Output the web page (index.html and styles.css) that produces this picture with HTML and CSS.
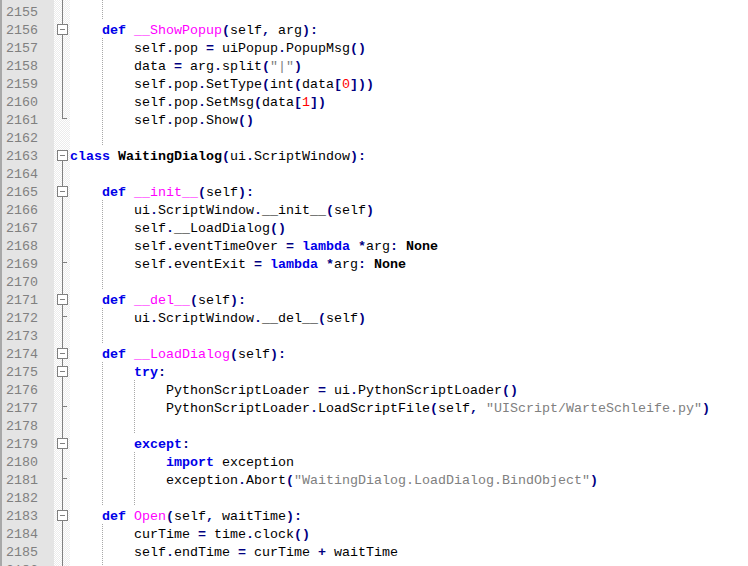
FILE: index.html
```html
<!DOCTYPE html>
<html>
<head>
<meta charset="utf-8">
<link rel="stylesheet" href="styles.css">
</head>
<body>
<div class="editor">
<div class="row"><span class="ln">2154</span><span class="fd v"></span><span class="cd">    <span class="g">    </span></span></div>
<div class="row"><span class="ln">2155</span><span class="fd v"></span><span class="cd">    <span class="g">    </span></span></div>
<div class="row"><span class="ln">2156</span><span class="fd box"></span><span class="cd">    <span class="k">def</span> <span class="d">__ShowPopup</span><span class="o">(</span>self<span class="o">,</span> arg<span class="o">):</span></span></div>
<div class="row"><span class="ln">2157</span><span class="fd v"></span><span class="cd">    <span class="g">    </span>self<span class="o">.</span>pop <span class="o">=</span> uiPopup<span class="o">.</span>PopupMsg<span class="o">()</span></span></div>
<div class="row"><span class="ln">2158</span><span class="fd v"></span><span class="cd">    <span class="g">    </span>data <span class="o">=</span> arg<span class="o">.</span>split<span class="o">(</span><span class="s">"|"</span><span class="o">)</span></span></div>
<div class="row"><span class="ln">2159</span><span class="fd v"></span><span class="cd">    <span class="g">    </span>self<span class="o">.</span>pop<span class="o">.</span>SetType<span class="o">(</span>int<span class="o">(</span>data<span class="o">[</span><span class="n">0</span><span class="o">]))</span></span></div>
<div class="row"><span class="ln">2160</span><span class="fd v"></span><span class="cd">    <span class="g">    </span>self<span class="o">.</span>pop<span class="o">.</span>SetMsg<span class="o">(</span>data<span class="o">[</span><span class="n">1</span><span class="o">])</span></span></div>
<div class="row"><span class="ln">2161</span><span class="fd end"></span><span class="cd">    <span class="g">    </span>self<span class="o">.</span>pop<span class="o">.</span>Show<span class="o">()</span></span></div>
<div class="row"><span class="ln">2162</span><span class="fd"></span><span class="cd">    <span class="g">    </span></span></div>
<div class="row"><span class="ln">2163</span><span class="fd box first"></span><span class="cd"><span class="k">class</span> <span class="c">WaitingDialog</span><span class="o">(</span>ui<span class="o">.</span>ScriptWindow<span class="o">):</span></span></div>
<div class="row"><span class="ln">2164</span><span class="fd v"></span><span class="cd"></span></div>
<div class="row"><span class="ln">2165</span><span class="fd box"></span><span class="cd">    <span class="k">def</span> <span class="d">__init__</span><span class="o">(</span>self<span class="o">):</span></span></div>
<div class="row"><span class="ln">2166</span><span class="fd v"></span><span class="cd">    <span class="g">    </span>ui<span class="o">.</span>ScriptWindow<span class="o">.</span>__init__<span class="o">(</span>self<span class="o">)</span></span></div>
<div class="row"><span class="ln">2167</span><span class="fd v"></span><span class="cd">    <span class="g">    </span>self<span class="o">.</span>__LoadDialog<span class="o">()</span></span></div>
<div class="row"><span class="ln">2168</span><span class="fd v"></span><span class="cd">    <span class="g">    </span>self<span class="o">.</span>eventTimeOver <span class="o">=</span> <span class="k">lambda</span> <span class="o">*</span>arg<span class="o">:</span> <span class="c">None</span></span></div>
<div class="row"><span class="ln">2169</span><span class="fd tee"></span><span class="cd">    <span class="g">    </span>self<span class="o">.</span>eventExit <span class="o">=</span> <span class="k">lambda</span> <span class="o">*</span>arg<span class="o">:</span> <span class="c">None</span></span></div>
<div class="row"><span class="ln">2170</span><span class="fd v"></span><span class="cd">    <span class="g">    </span></span></div>
<div class="row"><span class="ln">2171</span><span class="fd box"></span><span class="cd">    <span class="k">def</span> <span class="d">__del__</span><span class="o">(</span>self<span class="o">):</span></span></div>
<div class="row"><span class="ln">2172</span><span class="fd tee"></span><span class="cd">    <span class="g">    </span>ui<span class="o">.</span>ScriptWindow<span class="o">.</span>__del__<span class="o">(</span>self<span class="o">)</span></span></div>
<div class="row"><span class="ln">2173</span><span class="fd v"></span><span class="cd">    <span class="g">    </span></span></div>
<div class="row"><span class="ln">2174</span><span class="fd box"></span><span class="cd">    <span class="k">def</span> <span class="d">__LoadDialog</span><span class="o">(</span>self<span class="o">):</span></span></div>
<div class="row"><span class="ln">2175</span><span class="fd box"></span><span class="cd">    <span class="g">    </span><span class="k">try</span><span class="o">:</span></span></div>
<div class="row"><span class="ln">2176</span><span class="fd v"></span><span class="cd">    <span class="g">    </span><span class="g">    </span>PythonScriptLoader <span class="o">=</span> ui<span class="o">.</span>PythonScriptLoader<span class="o">()</span></span></div>
<div class="row"><span class="ln">2177</span><span class="fd tee"></span><span class="cd">    <span class="g">    </span><span class="g">    </span>PythonScriptLoader<span class="o">.</span>LoadScriptFile<span class="o">(</span>self<span class="o">,</span> <span class="s">"UIScript/WarteSchleife.py"</span><span class="o">)</span></span></div>
<div class="row"><span class="ln">2178</span><span class="fd v"></span><span class="cd">    <span class="g">    </span><span class="g">    </span></span></div>
<div class="row"><span class="ln">2179</span><span class="fd box"></span><span class="cd">    <span class="g">    </span><span class="k">except</span><span class="o">:</span></span></div>
<div class="row"><span class="ln">2180</span><span class="fd v"></span><span class="cd">    <span class="g">    </span><span class="g">    </span><span class="k">import</span> exception</span></div>
<div class="row"><span class="ln">2181</span><span class="fd tee"></span><span class="cd">    <span class="g">    </span><span class="g">    </span>exception<span class="o">.</span>Abort<span class="o">(</span><span class="s">"WaitingDialog.LoadDialog.BindObject"</span><span class="o">)</span></span></div>
<div class="row"><span class="ln">2182</span><span class="fd v"></span><span class="cd">    <span class="g">    </span><span class="g">    </span></span></div>
<div class="row"><span class="ln">2183</span><span class="fd box"></span><span class="cd">    <span class="k">def</span> <span class="d">Open</span><span class="o">(</span>self<span class="o">,</span> waitTime<span class="o">):</span></span></div>
<div class="row"><span class="ln">2184</span><span class="fd v"></span><span class="cd">    <span class="g">    </span>curTime <span class="o">=</span> time<span class="o">.</span>clock<span class="o">()</span></span></div>
<div class="row"><span class="ln">2185</span><span class="fd v"></span><span class="cd">    <span class="g">    </span>self<span class="o">.</span>endTime <span class="o">=</span> curTime <span class="o">+</span> waitTime</span></div>
<div class="row"><span class="ln">2186</span><span class="fd v"></span><span class="cd">    <span class="g">    </span></span></div>
</div>
</body>
</html>
```

FILE: styles.css
```css
html, body {
  margin: 0;
  padding: 0;
  background: #ffffff;
}

body {
  width: 748px;
  height: 566px;
  overflow: hidden;
  font-family: "Liberation Mono", "Courier New", monospace;
  font-size: 13.333px;
}

.editor {
  margin-top: -16px;
}

.row {
  display: flex;
  height: 18px;
}

.ln {
  flex: none;
  width: 54px;
  height: 18px;
  line-height: 22px;
  box-sizing: border-box;
  border-left: 2px solid #a8a8a8;
  padding-right: 16px;
  text-align: right;
  background: #e4e4e4;
  color: #808080;
}

.fd {
  flex: none;
  width: 16px;
  position: relative;
  background-image: conic-gradient(#ececec 25%, #ffffff 0 50%, #ececec 0 75%, #ffffff 0);
  background-size: 2px 2px;
}

.fd::before,
.fd::after {
  content: "";
  position: absolute;
}

.fd.v::before,
.fd.tee::before,
.fd.box::before {
  left: 8px;
  top: 0;
  width: 1px;
  height: 100%;
  background: #808080;
}

.fd.box.first::before {
  top: 9px;
  height: 9px;
}

.fd.box::after {
  left: 3px;
  top: 4px;
  width: 11px;
  height: 11px;
  box-sizing: border-box;
  border: 1px solid #808080;
  background: linear-gradient(#808080, #808080) center / 5px 1px no-repeat, #ffffff;
}

.fd.end::before {
  left: 8px;
  top: 0;
  width: 1px;
  height: 9px;
  background: #808080;
}

.fd.end::after,
.fd.tee::after {
  left: 8px;
  top: 8px;
  width: 5px;
  height: 1px;
  background: #808080;
}

.cd {
  flex: 1;
  height: 18px;
  line-height: 22px;
  white-space: pre;
  color: #000000;
}

.g {
  display: inline-block;
  vertical-align: top;
  height: 18px;
  background: repeating-linear-gradient(to bottom, #a8a8a8 0 1px, transparent 1px 2px) left top / 1px 100% no-repeat;
}

.k {
  color: #0000e8;
  font-weight: bold;
}

.c {
  color: #000000;
  font-weight: bold;
}

.d {
  color: #ff00ff;
}

.o {
  color: #000080;
  font-weight: bold;
}

.s {
  color: #808080;
}

.n {
  color: #ff0000;
}
```
